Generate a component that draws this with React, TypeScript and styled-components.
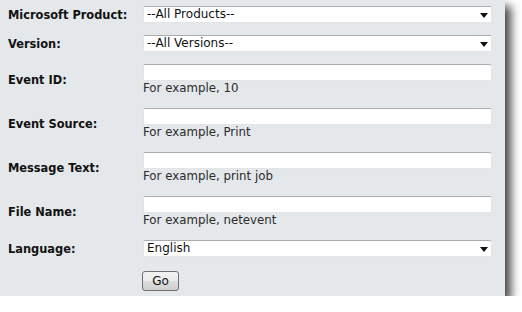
import React from "react";
import styled, { createGlobalStyle } from "styled-components";

const GlobalStyle = createGlobalStyle`
  body {
    margin: 0;
    background: #ffffff;
    font-family: Verdana, "DejaVu Sans", sans-serif;
  }
`;

interface Field {
  label: string;
  kind: "select" | "text";
  value?: string;
  hint?: string;
}

const fields: Field[] = [
  { label: "Microsoft Product:", kind: "select", value: "--All Products--" },
  { label: "Version:", kind: "select", value: "--All Versions--" },
  { label: "Event ID:", kind: "text", hint: "For example, 10" },
  { label: "Event Source:", kind: "text", hint: "For example, Print" },
  { label: "Message Text:", kind: "text", hint: "For example, print job" },
  { label: "File Name:", kind: "text", hint: "For example, netevent" },
  { label: "Language:", kind: "select", value: "English" },
];

const Arrow = () => (
  <svg width="8" height="5" viewBox="0 0 8 5">
    <path d="M0 0 H8 L4 5 Z" fill="#111" />
  </svg>
);

const App: React.FC = () => {
  return (
    <>
      <GlobalStyle />
      <Panel>
        {fields.map((f) => (
          <Row key={f.label}>
            <Label>{f.label}</Label>
            <FieldCol>
              {f.kind === "select" ? (
                <SelectWrap>
                  <Select defaultValue={f.value}>
                    <option>{f.value}</option>
                  </Select>
                  <ArrowSlot>
                    <Arrow />
                  </ArrowSlot>
                </SelectWrap>
              ) : (
                <TextBox type="text" />
              )}
              {f.hint && <Hint>{f.hint}</Hint>}
            </FieldCol>
          </Row>
        ))}
        <Row>
          <Label />
          <FieldCol>
            <GoButton>Go</GoButton>
          </FieldCol>
        </Row>
      </Panel>
    </>
  );
};

const Panel = styled.div`
  box-sizing: border-box;
  width: 505px;
  height: 296px;
  padding: 6px 13px 0 8px;
  background: #e4e8eb;
  box-shadow: 6px 6px 9px rgba(0, 0, 0, 0.72);
  display: flex;
  flex-direction: column;
  gap: 12px;
`;

const Row = styled.div`
  display: flex;
  align-items: center;
`;

const Label = styled.div`
  width: 135px;
  flex: none;
  font-size: 11.4px;
  line-height: 14px;
  font-weight: 700;
  color: #111;
`;

const FieldCol = styled.div`
  flex: 1;
  display: flex;
  flex-direction: column;
  align-items: flex-start;
`;

const boxLook = `
  box-sizing: border-box;
  display: block;
  width: 349px;
  height: 17px;
  margin: 0;
  background: #ffffff;
  border: 1px solid #e2e4e6;
  border-top-color: #a9abae;
  border-radius: 2px;
  font-family: Verdana, "DejaVu Sans", sans-serif;
  font-size: 12px;
  color: #111;
  outline: none;
`;

const SelectWrap = styled.div`
  position: relative;
  width: 349px;
  height: 17px;
`;

const Select = styled.select`
  ${boxLook}
  appearance: none;
  -webkit-appearance: none;
  padding: 0 0 0 3px;
  line-height: 15px;
`;

const ArrowSlot = styled.span`
  position: absolute;
  right: 4px;
  top: 7px;
  display: flex;
  pointer-events: none;
`;

const TextBox = styled.input`
  ${boxLook}
  padding: 0 3px;
`;

const Hint = styled.div`
  font-size: 11.8px;
  line-height: 15px;
  color: #2a2a2a;
`;

const GoButton = styled.button`
  box-sizing: border-box;
  width: 37px;
  height: 20px;
  margin: 2px 0 0 -1px;
  padding: 0;
  border: 1px solid #707070;
  border-radius: 3px;
  background: linear-gradient(#f2f2f2 0%, #ebebeb 50%, #dddddd 51%, #cfcfcf 100%);
  font-family: Verdana, "DejaVu Sans", sans-serif;
  font-size: 12px;
  color: #111;
`;

export default App;
